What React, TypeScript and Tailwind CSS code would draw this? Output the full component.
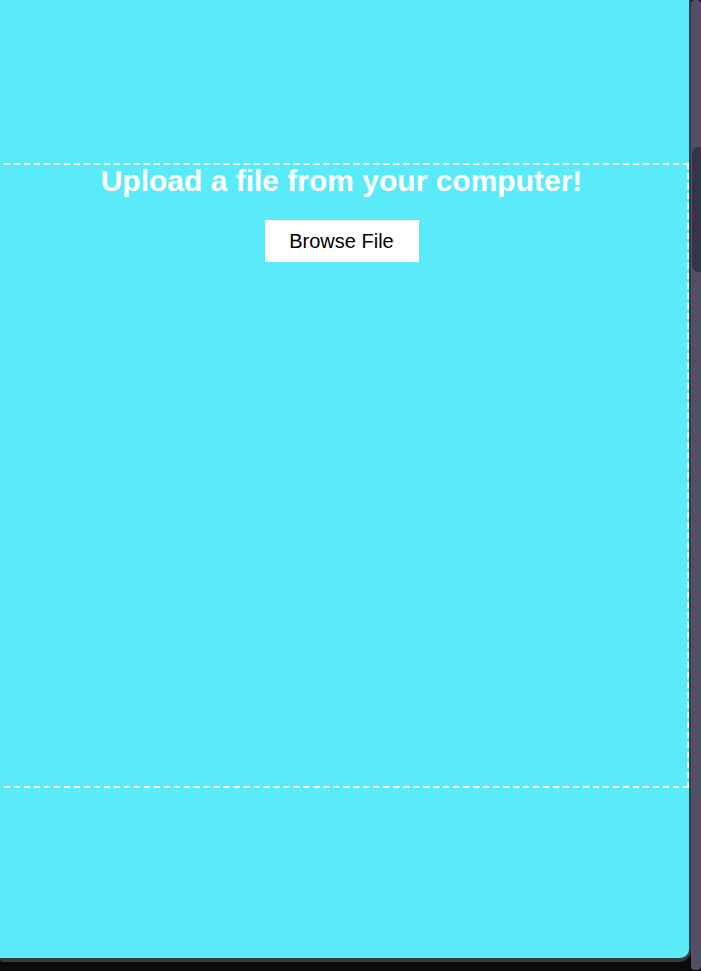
export default function App() {
  return (
    <div className="flex h-[971px] w-[701px] bg-[#0b0b0d] font-['Liberation_Sans',Arial,sans-serif]">
      <div className="h-[962px] w-[691px] overflow-hidden rounded-br-[12px] rounded-bl-[3px] border-r-2 border-b-4 border-[#3b3b3e] bg-[#5beaf9]">
        <div className="pt-[163px]">
          <div className="-ml-[6px] flex h-[625px] w-[695px] flex-col items-center border-2 border-dashed border-white">
            <h1 className="-mt-[1px] text-[30px] leading-[34px] font-bold text-white">
              Upload a file from your computer!
            </h1>
            <button className="mt-[22px] h-[42px] w-[154px] bg-white text-[20px] text-black">
              Browse File
            </button>
          </div>
        </div>
      </div>
      <div className="relative h-[970px] w-[10px] rounded-[4px] bg-[#524f67]">
        <div className="absolute top-[147px] left-[1px] h-[125px] w-[9px] rounded-l-[6px] bg-[#36344a]" />
      </div>
    </div>
  );
}
